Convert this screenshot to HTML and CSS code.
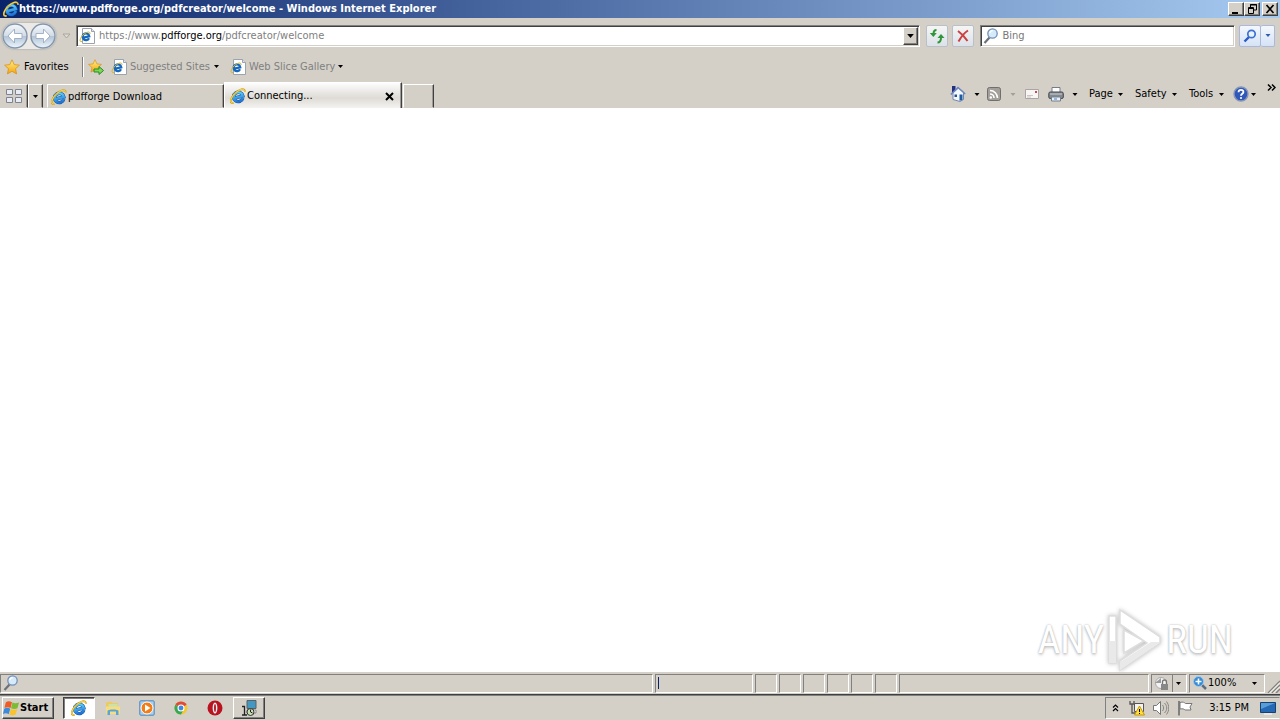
FILE: index.html
```html
<!DOCTYPE html>
<html lang="en">
<head>
<meta charset="utf-8">
<title>Windows Internet Explorer</title>
<link rel="stylesheet" href="styles.css">
</head>
<body>
<svg class="defs" aria-hidden="true">
  <defs>
    <linearGradient id="blue" x1="0" y1="0" x2="0" y2="1"><stop offset="0" stop-color="#5fd3fa"/><stop offset="1" stop-color="#1f74d4"/></linearGradient>
    <linearGradient id="orb" x1="0" y1="0" x2="0" y2="1"><stop offset="0" stop-color="#f4f8fb"/><stop offset=".48" stop-color="#d3dde8"/><stop offset=".52" stop-color="#b4c5d8"/><stop offset="1" stop-color="#edf7fd"/></linearGradient>
    <linearGradient id="gold" x1="0" y1="0" x2="0" y2="1"><stop offset="0" stop-color="#fff08a"/><stop offset="1" stop-color="#f5a50c"/></linearGradient>
    <symbol id="ie" viewBox="0 0 16 16">
      <g transform="rotate(-14 8 9)">
        <path d="M12.400 11.300A4.700 4.700 0 1 1 13 9.200H5" fill="none" stroke="#15509f" stroke-width="3.400"/>
        <path d="M12.400 11.300A4.700 4.700 0 1 1 13 9.200H5" fill="none" stroke="url(#blue)" stroke-width="2.500"/>
      </g>
      <path d="M3.600 14.800C-.6 16 0 10.800 4.400 6 8.800 1.400 15 -.8 15 3.800" fill="none" stroke="#c79a1c" stroke-width="1.800"/>
      <path d="M3.600 14.800C-.6 16 0 10.800 4.400 6 8.800 1.400 15 -.8 15 3.800" fill="none" stroke="#ffe15a"/>
    </symbol>
    <symbol id="iedoc" viewBox="0 0 16 16">
      <path d="M3.500.5h9l3 3v12h-12z" fill="#fff" stroke="#9aa3ae"/><path d="M12.500.5v3h3" fill="#dfe5ec" stroke="#9aa3ae"/>
      <path d="M9.700 10.800A3.400 3.400 0 1 1 10.400 9H4" fill="none" stroke="#1768bd" stroke-width="2.200" transform="rotate(-12 7 9)"/>
      <path d="M3 13.500C-.5 14.500 1 10 4 7s7.500-4.500 7-1" fill="none" stroke="#d6b62c"/>
    </symbol>
    <symbol id="star" viewBox="0 0 16 16"><path d="M8 .8l2.200 4.800 5.200.6-3.900 3.500 1.100 5.200L8 12.300l-4.600 2.600 1.100-5.200L.6 6.200l5.200-.6z" fill="url(#gold)" stroke="#d8921a" stroke-width=".8"/></symbol>
    <symbol id="caret" viewBox="0 0 5 3"><path d="M0 0h5L2.500 3z" fill="currentColor"/></symbol>
    <symbol id="lens" viewBox="0 0 16 16"><path d="M6.500 9.500L1.500 15" stroke="#6d7077" stroke-width="2.200"/><circle cx="9.500" cy="5.500" r="4.700" fill="#d5eafa" stroke="#7590b6" stroke-width="1.300"/><path d="M6.800 5a3 3 0 0 1 3-2.300" fill="none" stroke="#fff" stroke-width="1.300"/></symbol>
  </defs>
</svg>

<header class="titlebar">
  <svg class="i16"><use href="#ie"/></svg>
  <h1 class="title">https://www.pdfforge.org/pdfcreator/welcome - Windows Internet Explorer</h1>
  <button class="winbtn" aria-label="Minimize"><svg viewBox="0 0 12 10"><path d="M2 8h6v2H2z"/></svg></button>
  <button class="winbtn" aria-label="Restore"><svg viewBox="0 0 12 10"><path d="M4.500 3V.5h6V6H8M4 1h7M2.500 3.500h5v6h-5zM2 4.500h6" fill="none" stroke="#000"/></svg></button>
  <button class="winbtn close" aria-label="Close"><svg viewBox="0 0 12 10"><path d="M2.500 1l7 8M9.500 1l-7 8" stroke="#000" stroke-width="1.700"/></svg></button>
</header>

<nav class="navbar">
  <div class="orbs">
    <button class="orb" aria-label="Back"><svg viewBox="0 0 26 26"><circle cx="13" cy="13" r="12" fill="url(#orb)" stroke="#8594a8" stroke-width="1.400"/><path d="M12.500 6L6 13l6.500 7v-4.500H20v-5h-7.500z" fill="#fff" stroke="#a3b1c4"/></svg></button>
    <button class="orb" aria-label="Forward"><svg viewBox="0 0 26 26"><circle cx="13" cy="13" r="12" fill="url(#orb)" stroke="#8594a8" stroke-width="1.400"/><path d="M13.500 6l6.500 7-6.500 7v-4.500H6v-5h7.500z" fill="#fff" stroke="#a3b1c4"/></svg></button>
  </div>
  <button class="history" aria-label="Recent pages"><svg viewBox="0 0 9 6"><path d="M1 1h7L4.500 5z" fill="#dedad4" stroke="#aaa69f"/></svg></button>
  <div class="address">
    <svg class="i16"><use href="#iedoc"/></svg>
    <a class="url" href="#">https://www.<span class="host">pdfforge.org</span>/pdfcreator/welcome</a>
    <button class="drop" aria-label="Show address list"><svg class="caret big"><use href="#caret"/></svg></button>
  </div>
  <button class="tool" aria-label="Refresh"><svg class="i16" viewBox="0 0 16 16"><path d="M7.500 2C5 2 4.500 3.500 4.500 6M8.500 14.500c2.500 0 3.500-2 3.500-5" fill="none" stroke="#31963a" stroke-width="2"/><path d="M.8 5h7L4.300 9zM8.500 10h7L12 6z" fill="#31963a"/></svg></button>
  <button class="tool" aria-label="Stop"><svg class="i16" viewBox="0 0 16 16"><path d="M3 3c4 3 7 6 9.500 10M13 2.500C9 5 6 9 3.500 13.500" fill="none" stroke="#cc3f42" stroke-width="2"/></svg></button>
  <div class="search"><svg class="i16"><use href="#lens"/></svg><input class="query" type="text" placeholder="Bing" aria-label="Search"></div>
  <div class="go">
    <button class="tool find" aria-label="Search"><svg class="i16" viewBox="0 0 16 16"><path d="M7 9l-4.500 4.500" stroke="#285cc4" stroke-width="2.400"/><circle cx="9.500" cy="6" r="3.700" fill="#e9f3ff" stroke="#3c70d1" stroke-width="1.700"/></svg></button>
    <button class="tool more" aria-label="Search options"><svg class="caret blue"><use href="#caret"/></svg></button>
  </div>
</nav>

<div class="favorites">
  <button class="flat fav"><svg class="i16"><use href="#star"/></svg>Favorites</button>
  <span class="rule"></span>
  <button class="flat add" aria-label="Add to Favorites Bar"><svg class="i16" viewBox="0 0 16 16"><use href="#star" width="14" height="14"/><path d="M6 10h5V7.500l4.500 4-4.500 4V13H6z" fill="#7cda4f" stroke="#28882d"/></svg></button>
  <button class="flat dim sites"><svg class="i16"><use href="#iedoc"/></svg>Suggested Sites<svg class="caret"><use href="#caret"/></svg></button>
  <button class="flat dim slices"><svg class="i16"><use href="#iedoc"/></svg>Web Slice Gallery<svg class="caret"><use href="#caret"/></svg></button>
</div>

<div class="tabrow">
  <button class="tab quick" aria-label="Quick Tabs"><svg class="i16" viewBox="0 0 16 16"><path d="M.5 1.500h6v5h-6zM9.500 1.500h6v5h-6zM.5 9.500h6v5h-6zM9.500 9.500h6v5h-6z" fill="#e9edf3" stroke="#7c8492"/></svg></button>
  <button class="tab list" aria-label="Tab list"><svg class="caret"><use href="#caret"/></svg></button>
  <button class="tab page"><svg class="i16"><use href="#ie"/></svg>pdfforge Download</button>
  <div class="tab page active"><svg class="i16"><use href="#ie"/></svg><span class="label">Connecting...</span><button class="flat shut" aria-label="Close tab"><svg viewBox="0 0 9 9"><path d="M1 1l7 7M8 1L1 8" stroke="#000" stroke-width="2"/></svg></button></div>
  <button class="tab new" aria-label="New tab"></button>
  <div class="commands">
    <button class="flat" aria-label="Home"><svg class="i16" viewBox="0 0 16 16"><path d="M2 0h3.500v7H2z" fill="#23307f"/><path d="M3 7v6.500l7 2 3.500-2V6L8.500 2z" fill="#f4f8fd" stroke="#7189b2"/><path d="M.8 8.500L8 1.500 15.200 8" fill="none" stroke="#6c84bd" stroke-width="1.500"/><path d="M9.500 8.500h3V14l-3 .8z" fill="#1f5e9d"/><path d="M4.500 8.500H7V11H4.500z" fill="#274f91"/></svg><svg class="caret wide"><use href="#caret"/></svg></button>
    <button class="flat feeds" aria-label="Feeds"><svg class="i16" viewBox="0 0 16 16"><rect x="1.500" y="1.500" width="13" height="13" rx="2" fill="#a3a09c" stroke="#716e6b"/><path d="M4 4.500A7.500 7.500 0 0 1 11.500 12M4 8a4 4 0 0 1 4 4" fill="none" stroke="#fff" stroke-width="1.600"/><circle cx="4.800" cy="11.500" r="1.200" fill="#fff"/></svg><svg class="caret wide pale"><use href="#caret"/></svg></button>
    <button class="flat mail" aria-label="Read mail"><svg class="i16" viewBox="0 0 16 16"><path d="M1.500 3.500h13v9h-13z" fill="#f8f5f4" stroke="#aaa5a4"/><path d="M3 9.500h6M3 11h4" stroke="#cbc6c6"/><path d="M11 5h2v2h-2z" fill="#c64855"/></svg></button>
    <button class="flat print" aria-label="Print"><svg class="i16" viewBox="0 0 16 16"><path d="M4 1.500h8V7H4z" fill="#fff" stroke="#777d86"/><rect x=".8" y="6" width="14.500" height="6.500" rx="1.500" fill="#858a91" stroke="#41464d"/><path d="M2 8h12" stroke="#c9cfd5"/><path d="M3.500 11h9v4h-9z" fill="#e9f0f7" stroke="#74808d"/><path d="M6 13h3" stroke="#3b83c3"/></svg><svg class="caret wide"><use href="#caret"/></svg></button>
    <button class="flat menu page-menu">Page<svg class="caret"><use href="#caret"/></svg></button>
    <button class="flat menu safety-menu">Safety<svg class="caret"><use href="#caret"/></svg></button>
    <button class="flat menu tools-menu">Tools<svg class="caret"><use href="#caret"/></svg></button>
    <button class="flat help" aria-label="Help"><svg class="i16" viewBox="0 0 16 16"><circle cx="8" cy="8" r="7" fill="#2f58ba" stroke="#8796b7" stroke-width="1.400"/><path d="M5.500 6.200C5.700 3 10.700 3.300 10.400 6.100 10.200 7.800 8 7.700 8 9.800" fill="none" stroke="#fff" stroke-width="1.800"/><circle cx="8" cy="12" r="1.100" fill="#fff"/></svg><svg class="caret"><use href="#caret"/></svg></button>
    <button class="flat overflow" aria-label="More commands"><svg viewBox="0 0 9 7"><path d="M1 .5l3 3-3 3M5 .5l3 3-3 3" fill="none" stroke="#000" stroke-width="1.500"/></svg></button>
  </div>
</div>

<main class="content">
  <div class="watermark">
    <span>ANY</span>
    <svg viewBox="0 0 60 66"><path d="M15 3l40 27v6L15 63v-9l27-18L15 17zM15 3v14M4 9h7v47H4zM19 23l20 11-20 12z" fill="#fff" stroke="#dedede" stroke-width="1.500"/><path d="M4 34h7v22H4zM46 35h9L15 63v-8z" fill="#e9e9e9"/></svg>
    <span>RUN</span>
  </div>
</main>

<footer class="status">
  <div class="cell message"><svg class="i16"><use href="#lens"/></svg></div>
  <div class="cell progress"><span class="bar"></span></div>
  <div class="cell box"></div><div class="cell box"></div><div class="cell box"></div><div class="cell box"></div><div class="cell box"></div><div class="cell box"></div>
  <div class="cell zone"></div>
  <button class="cell protect" aria-label="Security report"><svg class="i16" viewBox="0 0 16 16"><circle cx="7" cy="8" r="5.500" fill="#f3f3f3" stroke="#aaa"/><path d="M1 8l6-5v5z" fill="#999"/><path d="M8.500 9V7a2 2 0 0 1 4 0v2" fill="none" stroke="#777" stroke-width="1.300"/><path d="M7 9h7v6H7z" fill="#888"/></svg><span class="split"></span><svg class="caret"><use href="#caret"/></svg></button>
  <button class="cell zoom"><svg class="i16" viewBox="0 0 16 16"><path d="M9 9l5 5" stroke="#626d7e" stroke-width="2.500"/><circle cx="6.500" cy="6.500" r="5" fill="#348bd4" stroke="#a6c8e6"/><path d="M3.500 6.500h6M6.500 3.500v6" stroke="#fff" stroke-width="1.600"/></svg><span class="label">100%</span><svg class="caret"><use href="#caret"/></svg></button>
  <svg class="grip" viewBox="0 0 13 13"><path d="M1 13L13 1M5 13l8-8M9 13l4-4" stroke="#85817b" stroke-width="1.400"/><path d="M2.500 13L13 2.500M6.500 13L13 6.500" stroke="#fff"/></svg>
</footer>

<div class="taskbar">
  <button class="start"><svg class="flag" viewBox="0 0 18 16"><path d="M3 2c2-1.500 4-1.500 6.500 0L8 8C6 6.800 3.500 6.800 1.500 8z" fill="#ed5b27"/><path d="M10 2.300c2 1 4 1 7 0L15.300 8.300c-2.300 1.200-4.800 1-6.800 0z" fill="#7dbb35"/><path d="M1.300 8.700c2-1.200 4.200-1.200 6.400 0L6 14.500C4.300 13.300 2 13 0 14.300z" fill="#3c8bda"/><path d="M8.300 9c2 1 4.500 1.200 6.800 0L13.300 15c-2 1.200-4.700 1-6.600 0z" fill="#fac22d"/></svg>Start</button>
  <div class="apps">
    <button class="task pressed" aria-label="Internet Explorer"><svg class="i16"><use href="#ie"/></svg></button>
    <button class="task" aria-label="Explorer"><svg class="i16" viewBox="0 0 16 16"><path d="M1 2.500l5-1 1 1.500h6V12H1z" fill="#f0c95c"/><path d="M3.500 4h9v4h-9z" fill="#c9e2a8"/><path d="M1 6.500h14V14H1z" fill="#f6dd83"/><path d="M2.500 15V11c0-2 11-2 11 0v4h-2.500v-3.500H5V15z" fill="#5aa5d6"/></svg></button>
    <button class="task" aria-label="Media Player"><svg class="i16" viewBox="0 0 16 16"><rect x=".8" y=".8" width="14.400" height="14.400" rx="1" fill="#a4d0f3" stroke="#5085b5"/><circle cx="8" cy="8" r="6" fill="#f47c14" stroke="#fff"/><path d="M6 4.500L11.500 8 6 11.500z" fill="#fff"/></svg></button>
    <button class="task" aria-label="Chrome"><svg class="i16" viewBox="0 0 16 16"><circle cx="8" cy="8" r="6.500" fill="#f5c72f"/><path d="M8 8L2.400 4.700A6.500 6.500 0 0 1 13.600 4.700z" fill="#de4b3a"/><path d="M8 8L2.400 4.700A6.500 6.500 0 0 0 8 14.500l3-5.500z" fill="#37a853"/><circle cx="8" cy="8" r="3" fill="#4388dc" stroke="#fff" stroke-width="1.100"/></svg></button>
    <button class="task" aria-label="Opera"><svg class="i16" viewBox="0 0 16 16"><circle cx="8" cy="8" r="7.500" fill="#b91320"/><ellipse cx="8" cy="8" rx="2.400" ry="5.500" fill="#f9eeee"/><ellipse cx="8" cy="8" rx=".9" ry="4" fill="#a3101c"/></svg></button>
    <button class="task raised" aria-label="Installer"><svg class="i16" viewBox="0 0 16 16"><path d="M6 .5h9v8H6z" fill="#4298c0" stroke="#596066"/><path d="M6 10h9v3H6z" fill="#eee" stroke="#555" stroke-width=".6"/><path d="M1 6.500h2.500V15M1 15h5" fill="none" stroke="#222" stroke-width="1.300"/><circle cx="9.500" cy="12" r="3.500" fill="#c8deb5" stroke="#333"/><path d="M9.500 9.500V12l2 1" fill="none" stroke="#222"/></svg></button>
  </div>
  <div class="tray">
    <svg class="chev" viewBox="0 0 7 8"><path d="M1 3.500l2.500-2.500L6 3.500M1 7l2.500-2.500L6 7" fill="none" stroke="#000" stroke-width="1.200"/></svg>
    <svg class="i16" viewBox="0 0 16 16"><path d="M5.500 3.500h9v8h-9z" fill="#f3f3ef" stroke="#555"/><path d="M1 1v3h4V1M3 4v9h5" fill="none" stroke="#555" stroke-width="1.300"/><path d="M10.500 6l5 9h-10z" fill="#ffe039" stroke="#c7960a"/><path d="M10.500 9v3M10.500 13v1" stroke="#000"/></svg>
    <svg class="i16 sound" viewBox="0 0 16 16"><path d="M.5 5.500h3l4-4v13l-4-4h-3z" fill="#fff" stroke="#777"/><path d="M9.500 5c1.500 2 1.500 4 0 6M11.500 3c3 3 3 7 0 10M13.500 1.500c3 4 3 9 0 13" fill="none" stroke="#88857f"/></svg>
    <svg class="i16 action" viewBox="0 0 16 16"><path d="M2 1v14.500" stroke="#777" stroke-width="1.800"/><path d="M3 2.500c3-1 4.500 0 5.500 1h6.500l-2 3.500 1 3H8c-1-1-2-1.500-5-1z" fill="#fff" stroke="#777"/></svg>
    <time class="clock">3:15 PM</time>
    <svg class="desk" viewBox="0 0 16 14"><path d="M.5 1.500h15v10H.5z" fill="#2569b5" stroke="#174170"/><path d="M1 2h14L1 8z" fill="#579ed9"/><path d="M4 13h8" stroke="#eee" stroke-width="1.500"/></svg>
  </div>
</div>
</body>
</html>
```
FILE: styles.css
```css
* { box-sizing: border-box; }
html, body { height: 100%; }
body {
  margin: 0;
  display: flex;
  flex-direction: column;
  overflow: hidden;
  background: #d4d0c8;
  color: #000;
  font: 11px/14px Tahoma, "DejaVu Sans Condensed", "DejaVu Sans", sans-serif;
}
button, input { font: inherit; color: inherit; margin: 0; padding: 0; border: 0; background: none; }
svg { display: block; flex: none; }
.defs { position: absolute; width: 0; height: 0; }
.i16 { width: 16px; height: 16px; }
.caret { width: 5px; height: 3px; }
.caret.wide { width: 6px; }
.caret.big { width: 7px; height: 4px; }
.caret.blue { color: #2b5cae; width: 6px; }
.caret.pale { color: #a39e98; }
.flat { display: flex; align-items: center; white-space: nowrap; }

.titlebar { display: flex; align-items: center; height: 18px; padding: 0 2px 0 3px; background: linear-gradient(to right, #0a246a, #a6caf0); }
.title { flex: 1; margin: 0; color: #fff; font-size: 11px; font-weight: bold; white-space: nowrap; }
.winbtn { display: flex; align-items: center; justify-content: center; width: 16px; height: 14px; background: #d4d0c8; border: 1px solid; border-color: #fff #404040 #404040 #fff; box-shadow: inset -1px -1px #808080; }
.winbtn svg { width: 12px; height: 10px; }
.close { margin-left: 2px; }

.navbar { display: flex; align-items: center; height: 35px; padding: 0 5px 0 2px; }
.orbs { display: flex; gap: 2px; border-radius: 13px; background: #eceae6; box-shadow: 0 0 2px #87909c; }
.orb { width: 26px; height: 26px; }
.orb svg { width: 26px; height: 26px; }
.history { width: 20px; }
.history svg { width: 9px; height: 6px; margin: auto; }
.address, .search { display: flex; align-items: center; height: 22px; background: #fff; border: 1px solid; border-color: #808080 #fff #fff #808080; box-shadow: inset 1px 1px #404040, inset -1px -1px #d4d0c8; }
.address { flex: 1; padding: 0 1px 0 2px; margin-right: 6px; }
.url { flex: 1; padding-left: 4px; color: #808080; text-decoration: none; white-space: nowrap; }
.host { color: #000; }
.drop { display: flex; align-items: center; justify-content: center; width: 15px; height: 18px; background: #d4d0c8; border: 1px solid; border-color: #fff #404040 #404040 #fff; box-shadow: inset -1px -1px #808080; }
.tool { display: flex; align-items: center; justify-content: center; width: 22px; height: 22px; margin-right: 4px; border: 1px solid #b9c0ca; border-radius: 2px; background: linear-gradient(#f5f5f4, #dce2e9); }
.search { width: 20%; margin: 0 4px 0 2px; padding: 0 2px; }
.query { flex: 1; min-width: 0; padding: 0 3px; outline: 0; }
.query::placeholder { color: #777; opacity: 1; }
.go { display: flex; }
.go .tool { margin: 0; border-color: #a9b9d7; background: linear-gradient(#f4f7fc, #d5e2f7); }
.go .more { width: 14px; border-left: 0; }

.favorites { display: flex; align-items: center; height: 27px; padding-left: 4px; }
.fav { gap: 4px; width: 78px; }
.rule { width: 2px; height: 20px; border-left: 1px solid #808080; border-right: 1px solid #fff; }
.add { margin-left: 4px; }
.dim { color: #808080; }
.dim .caret { color: #000; margin-left: auto; }
.sites, .slices { gap: 3px; }
.sites { width: 108px; margin-left: 7px; }
.slices { width: 112px; margin-left: 11px; }

.tabrow { display: flex; align-items: flex-end; height: 28px; }
.tab { display: flex; align-items: center; height: 24px; border: 1px solid; border-color: #fff #404040 transparent #fff; box-shadow: inset -1px 0 #a09c95; }
.quick { width: 28px; justify-content: center; border-left: 0; }
.list { width: 15px; justify-content: center; }
.page { width: 177px; margin-left: 4px; padding: 2px 0 0 3px; gap: 1px; }
.active { width: 178px; height: 26px; margin-left: 0; padding: 1px 0 0 5px; border-bottom: 0; background: linear-gradient(#fdfdfd, #dedbd5 60%, #f4f3f1); }
.active .label { flex: 1; }
.shut { width: 9px; height: 9px; margin-right: 7px; }
.shut svg { width: 9px; height: 9px; }
.new { width: 31px; margin-left: 1px; }
.commands { display: flex; align-items: center; height: 28px; margin-left: auto; padding-right: 4px; }
.commands .flat { gap: 8px; }
.feeds { margin-left: 6px; }
.mail { margin-left: 8px; }
.print { margin-left: 8px; }
.commands .menu { justify-content: space-between; gap: 4px; }
.page-menu { width: 34px; margin-left: 11px; }
.safety-menu { width: 42px; margin-left: 12px; }
.tools-menu { width: 35px; margin-left: 12px; }
.commands .help { margin-left: 9px; gap: 2px; }
.overflow { align-self: flex-start; margin: 4px 0 0 11px; }
.overflow svg { width: 9px; height: 7px; }

.content { position: relative; flex: 1; min-height: 0; background: #fff; }
.watermark { position: absolute; right: 47px; bottom: -1px; display: flex; align-items: center; gap: 1px; color: #fff; font: 39px/48px "Roboto Condensed", "Liberation Sans Narrow", Roboto, sans-serif; text-shadow: 0 0 2px #aaa, 0 2px 3px #ccc; }
.watermark svg { width: 60px; height: 66px; filter: drop-shadow(0 0 2px #bbb); }

.status { display: flex; align-items: center; gap: 2px; height: 22px; padding: 1px 0; }
.cell { display: flex; align-items: center; height: 19px; border: 1px solid; border-color: #808080 #fff #fff #808080; }
.message { flex: 1; padding-left: 2px; }
.progress { width: 98px; padding: 2px; }
.bar { width: 1px; height: 12px; background: #0a246a; }
.box { width: 22px; }
.zone { width: 250px; }
.protect { width: 36px; gap: 2px; padding-left: 2px; }
.split { width: 1px; height: 17px; background: #808080; margin-right: 1px; }
.zoom { width: 76px; padding: 0 7px 0 2px; }
.zoom .label { flex: 1; text-align: left; }
.grip { width: 13px; height: 13px; align-self: flex-end; }

.taskbar { display: flex; align-items: center; height: 26px; padding: 0 0 0 2px; border-top: 1px solid #404040; box-shadow: inset 0 1px #808080; }
.start, .raised { background: #d4d0c8; border: 1px solid; border-color: #fff #404040 #404040 #fff; box-shadow: inset -1px -1px #808080; }
.start { display: flex; align-items: center; gap: 0; width: 52px; height: 22px; font-weight: bold; }
.flag { width: 17px; height: 16px; }
.apps { display: flex; align-items: center; gap: 2px; margin-left: 9px; }
.task { display: flex; align-items: center; justify-content: center; width: 32px; height: 22px; }
.pressed { background: #fff; border: 1px solid; border-color: #404040 #fff #fff #404040; box-shadow: inset 1px 1px #808080; }
.tray { display: flex; align-items: center; height: 22px; margin-left: auto; padding: 0 3px 0 6px; border: 1px solid; border-color: #808080 transparent #fff #808080; }
.chev { width: 7px; height: 8px; margin-right: 10px; }
.sound { margin-left: 8px; }
.action { margin-left: 8px; }
.clock { margin-left: 16px; white-space: nowrap; }
.desk { width: 16px; height: 14px; margin-left: 11px; }
```
